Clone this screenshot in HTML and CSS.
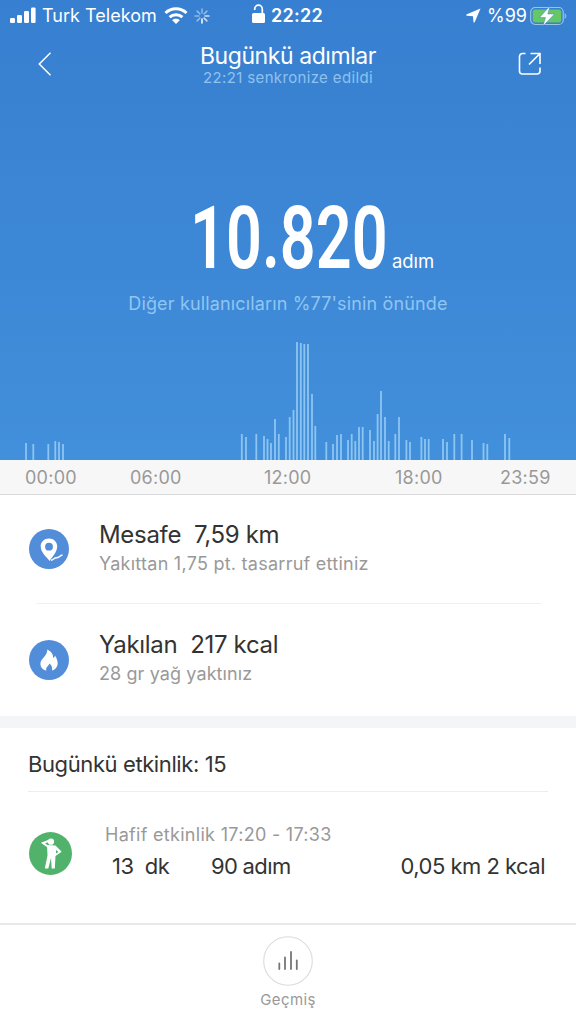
FILE: index.html
```html
<!DOCTYPE html>
<html lang="tr">
<head>
<meta charset="utf-8">
<title>Bugünkü adımlar</title>
<link rel="stylesheet" href="styles.css">
</head>
<body>
<main class="screen">
  <section class="hero">
    <div class="status">
      <div class="status-left">
        <svg width="26" height="17" viewBox="0 0 26 17" fill="#fff"><rect x="0" y="11" width="5" height="5" rx="1.200"/><rect x="7" y="8" width="5" height="8" rx="1.200"/><rect x="14" y="4" width="5" height="12" rx="1.200"/><rect x="21" y=".5" width="4.600" height="15.500" rx="1.200"/></svg>
        <span class="carrier">Turk Telekom</span>
        <svg class="wifi" width="24" height="18" viewBox="0 0 24 18" fill="none" stroke="#fff" stroke-width="3"><path d="M1.500 6C7.300.4 16.700.4 22.500 6M5.600 10.200c3.500-3.300 9.300-3.300 12.800 0"/><path d="M12 17 8.200 13.200c2-1.900 5.600-1.900 7.600 0Z" fill="#fff" stroke="none"/></svg>
        <svg class="spinner" width="16" height="16" viewBox="0 0 16 16" stroke="#fff" stroke-width="1.500" stroke-linecap="round"><path d="M8 11v4" /><path d="m10.100 10.100 2.800 2.800M11 8h4" opacity=".75"/><path d="m10.100 5.900 2.800-2.800M8 5V1M5.900 5.900 3.100 3.100M5 8H1M5.900 10.100l-2.800 2.800" opacity=".45"/></svg>
      </div>
      <div class="status-time">
        <svg class="lock" width="14" height="20" viewBox="0 0 14 20"><rect x="0" y="9" width="13" height="10" rx="1.500" fill="#fff"/><path d="M2.700 6V5a3.800 3.800 0 0 1 7.600 0v5" fill="none" stroke="#fff" stroke-width="1.700"/></svg>
        <span class="clock">22:22</span>
      </div>
      <div class="status-right">
        <svg width="15" height="15" viewBox="0 0 15 15" fill="#fff"><path d="M14.500.500.300 6.600Q0 7.400.800 7.700L7 8.200l.500 6q.500.700 1.200 0Z"/></svg>
        <span class="percent">%99</span>
        <svg class="battery" width="37" height="20" viewBox="0 0 37 20"><rect x=".7" y="1.500" width="32.500" height="17" rx="4.500" fill="none" stroke="#9bc3e8" stroke-width="1.200"/><rect x="2.700" y="3.500" width="28.500" height="13" rx="2.500" fill="#65c765"/><path d="M34.500 7v6q2-.5 2-3t-2-3" fill="#83b3e0"/><path d="M20 0 9.500 11.500h6L13 20 24.500 8h-6.700Z" fill="#fff" stroke="#3d83c8" stroke-width=".5"/></svg>
      </div>
    </div>
    <header class="nav">
      <svg width="14" height="24" viewBox="0 0 14 24" fill="none" stroke="#fff" stroke-width="1.500"><path d="M12.500.7 1.300 12l11.200 11.200"/></svg>
      <div class="nav-text">
        <h1 class="title">Bugünkü adımlar</h1>
        <p class="sync">22:21 senkronize edildi</p>
      </div>
      <svg width="24" height="24" viewBox="0 0 24 24" fill="none" stroke="#fff" stroke-width="1.600"><path d="M7.500 1.500H4.500a3 3 0 0 0-3 3V19a3 3 0 0 0 3 3H19a3 3 0 0 0 3-3v-3.500M12.500 1.500H22V12M22 1.500 11 12.500"/></svg>
    </header>
    <div class="steps"><span class="count">10.820</span><span class="unit">adım</span></div>
    <p class="compare">Diğer kullanıcıların %77'sinin önünde</p>
    <svg class="chart" width="576" height="120" viewBox="0 0 576 120" stroke="#8dc5f1" stroke-width="1.800"><path d="M26 120v-17M33.300 120v-16M48.300 120v-16M55.300 120v-19M59 120v-18M63 120v-16M241.800 120v-26M246 120v-23M256.300 120v-26M264 120v-24M267.500 120v-21M271 120v-17M275 120v-41M278.800 120v-26M286 120v-23M289.700 120v-43M293.500 120v-50M297 120v-118M300.800 120v-117M304.300 120v-116M308 120v-116M312 120v-66M315.300 120v-34M326.300 120v-18M333 120v-16M337 120v-25M341 120v-26M348 120v-20M351.700 120v-26M355.300 120v-19M359 120v-33M362.700 120v-33M370 120v-30M374 120v-19M377.600 120v-46M381 120v-69M385 120v-43M388.700 120v-19M395.300 120v-26M399 120v-43M406.400 120v-20M410 120v-18M421.400 120v-23M425 120v-21M428.700 120v-21M443 120v-21M447 120v-18M454.300 120v-26M461.600 120v-26M472 120v-20M483.500 120v-17M487.300 120v-16M505 120v-26M509.300 120v-22"/></svg>
  </section>
  <div class="axis"><span>00:00</span><span>06:00</span><span>12:00</span><span>18:00</span><span>23:59</span></div>
  <section class="metrics">
    <article class="metric">
      <svg class="badge" width="40" height="40" viewBox="0 0 40 40"><circle cx="20" cy="20" r="20" fill="#528dda"/><path fill="#fff" fill-rule="evenodd" d="M20 9.500c-4.700 0-8.300 3.500-8.300 8 0 5.800 5.800 10.500 9 14.500 2.500-4.500 7.500-8.700 7.500-14.500 0-4.500-3.600-8-8.200-8Zm0 4.300a3.900 3.900 0 1 1 0 7.800 3.900 3.900 0 0 1 0-7.800Z"/><path d="M22 31.300c2.500-.3 3-2.500 5.500-2.500 3 0 3-2.500 6-2.800" fill="none" stroke="#fff" stroke-width="1.500"/></svg>
      <div><h2 class="metric-title">Mesafe&nbsp; 7,59 km</h2><p class="metric-note fuel">Yakıttan 1,75 pt. tasarruf ettiniz</p></div>
    </article>
    <div class="divider"></div>
    <article class="metric">
      <svg class="badge" width="40" height="40" viewBox="0 0 40 40"><circle cx="20" cy="20" r="20" fill="#528dda"/><path fill="#fff" d="M18.300 9.500c5 2.200 6.200 6.100 5.700 8.500 1.200-.5 1.800-1.500 2-2.500 2.200 3.500 3 6.500 2.600 9-.5 3-2.500 5.200-5.600 6.100.8-3-.5-5.600-2.800-7.100-.3 2.500-4 3.500-2.800 7.200-3.600-.8-6-3.500-6-6.900 0-5.300 7.200-7.500 6.900-14.300Z"/></svg>
      <div><h2 class="metric-title">Yakılan&nbsp; 217 kcal</h2><p class="metric-note fat">28 gr yağ yaktınız</p></div>
    </article>
  </section>
  <section class="activities">
    <h2 class="activities-title">Bugünkü etkinlik: 15</h2>
    <article class="activity">
      <svg class="activity-icon" width="43" height="43" viewBox="0 0 43 43"><circle cx="21.500" cy="21.500" r="21.500" fill="#51b36b"/><circle cx="22" cy="9.700" r="3.100" fill="#fff"/><path d="m20 8.800-6 2.200 5.500 4" fill="none" stroke="#fff" stroke-width="2"/><path fill="#fff" d="m18 13 8.500.5 6.200 6.200-6.200 4.200-.7 12.600h-3.100L22 26l-2.700 10.500h-3.500l2.700-13Z"/><path d="m27 18 2.500 2-2.500 1.500Z" fill="#51b36b"/></svg>
      <div class="activity-body">
        <p class="activity-time">Hafif etkinlik 17:20 - 17:33</p>
        <div class="activity-values"><span class="duration">13&nbsp; dk</span><span class="walked">90<span class="walked-unit">adım</span></span><span class="energy">0,05 km 2 kcal</span></div>
      </div>
    </article>
  </section>
  <footer class="footer">
    <svg width="50" height="50" viewBox="0 0 50 50" fill="none"><circle cx="25" cy="25" r="24.300" stroke="#dcdcdc" stroke-width="1.100"/><path d="M16.300 33v-5.500M22 33V21.500M28 33V16M33.800 33v-8.500" stroke="#777" stroke-width="1.800" stroke-linecap="round"/></svg>
    <span class="history">Geçmiş</span>
  </footer>
</main>
</body>
</html>
```

FILE: styles.css
```css
* { box-sizing: border-box; }
body, h1, h2, p { margin: 0; font-weight: 400; }
svg { display: block; flex: none; }
body { font-family: Inter, "Liberation Sans", sans-serif; background: #fff; }
.screen { width: 576px; height: 1024px; display: flex; flex-direction: column; overflow: hidden; white-space: nowrap; }
.hero { height: 460px; flex: none; display: flex; flex-direction: column; color: #fff; background: linear-gradient(#377fd0, #428fdb); }
.status { height: 31px; display: grid; grid-template-columns: 252px 1fr 110px; align-items: center; }
.status-left, .status-time, .status-right { display: flex; align-items: center; }
.status-left { padding-left: 10px; }
.carrier { margin-left: 6px; width: 115px; font-size: 18px; letter-spacing: .02px; }
.wifi { margin-left: 7px; }
.spinner { margin-left: 6px; }
.lock { margin-bottom: 3px; }
.clock { margin-left: 5px; font-size: 18px; font-weight: 600; letter-spacing: .3px; }
.percent { width: 39px; margin-left: 6px; font-size: 18px; }
.battery { margin-left: 4px; }
.nav { height: 65px; padding: 10px 34px 0 38px; display: flex; justify-content: space-between; align-items: flex-start; }
.nav > svg { margin-top: 11px; }
.nav-text { padding-left: 6px; text-align: center; }
.title { font-size: 23px; line-height: 30px; letter-spacing: -.42px; }
.sync { font-size: 15px; line-height: 14px; letter-spacing: .35px; color: #8dc2ef; }
.steps { height: 102px; margin-top: 90px; display: flex; align-items: baseline; padding-left: 190px; }
.count { width: 202px; font-family: Roboto, sans-serif; font-size: 88px; font-weight: 600; line-height: 104px; transform: scaleX(.715); transform-origin: left; }
.unit { font-size: 18.500px; letter-spacing: -.1px; }
.compare { margin-top: 5px; text-align: center; font-size: 18px; line-height: 22px; letter-spacing: .15px; color: #8fc5f1; }
.chart { margin-top: auto; }
.axis { height: 35px; flex: none; padding-left: 25px; display: grid; grid-template-columns: 105px 134px 131px 105px 1fr; background: #f7f7f7; border-bottom: 1px solid #d9d9d9; color: #999; font-size: 18px; line-height: 35px; letter-spacing: .25px; }
.metrics { height: 221px; flex: none; padding-left: 29px; }
.metric { height: 108px; display: flex; align-items: center; gap: 30px; }
.metric > div { padding-bottom: 3px; }
.divider { width: 505px; height: 1px; margin-left: 7px; background: #f0f0f0; }
.divider + .metric { height: 111px; }
.metric-title { font-size: 24px; line-height: 32px; letter-spacing: -.32px; color: #333; }
.metric-note { font-size: 18px; line-height: 26px; color: #999; }
.fuel { letter-spacing: .26px; }
.fat { letter-spacing: .1px; }
.activities { height: 207px; flex: none; border-top: 12px solid #f4f5f6; padding-left: 28px; }
.activities-title { width: 520px; height: 64px; border-bottom: 1px solid #eee; font-size: 22px; line-height: 72px; letter-spacing: -.4px; color: #333; }
.activity { display: flex; padding-top: 29px; }
.activity-icon { margin: 11px 0 0 1px; }
.activity-body { margin-left: 33px; width: 440px; }
.activity-time { font-size: 18px; line-height: 27px; letter-spacing: .3px; color: #999; }
.activity-values { display: flex; padding-left: 7px; font-size: 22px; line-height: 36px; letter-spacing: -.52px; color: #333; }
.duration { width: 99px; }
.walked-unit { margin-left: 5px; }
.energy { margin-left: auto; }
.footer { height: 101px; border-top: 2px solid #e8e8e8; padding-top: 11px; display: flex; flex-direction: column; align-items: center; }
.history { margin-top: 4px; font-size: 15px; line-height: 20px; letter-spacing: .4px; color: #999; }
```
